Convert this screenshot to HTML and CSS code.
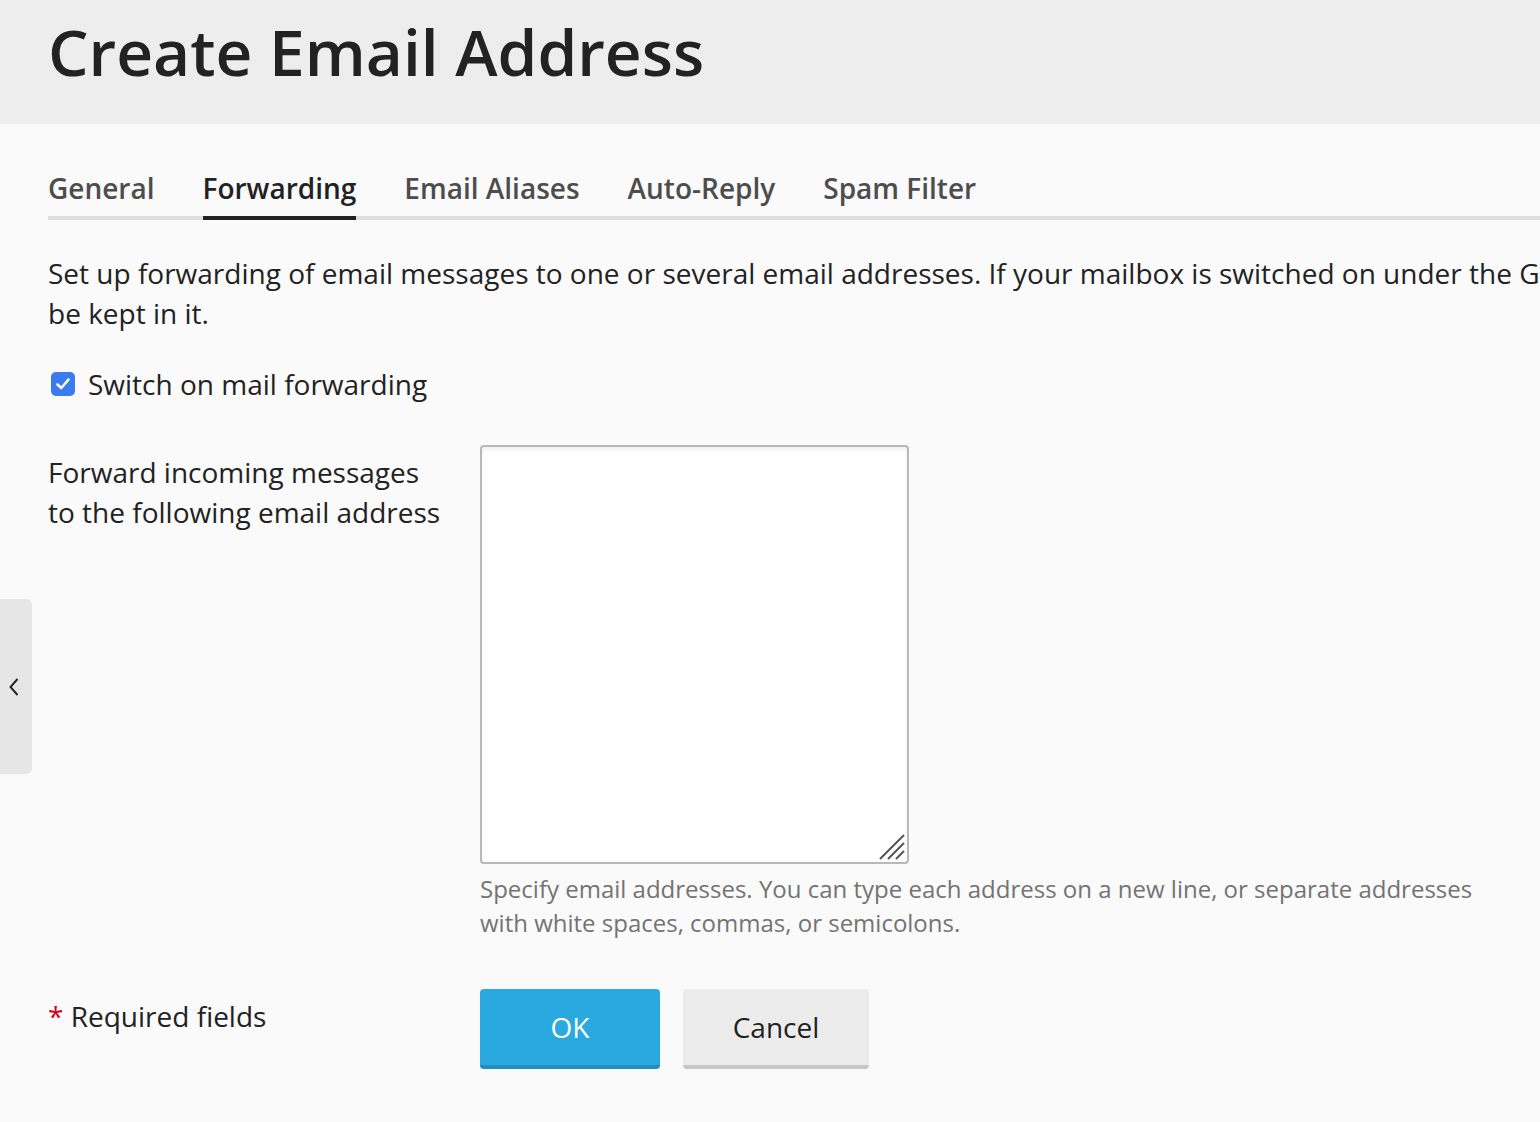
FILE: index.html
```html
<!DOCTYPE html>
<html lang="en">
<head>
<meta charset="utf-8">
<title>Create Email Address</title>
<link rel="stylesheet" href="styles.css">
</head>
<body>
<header class="page-header">
  <h1 class="page-title">Create Email Address</h1>
</header>
<main class="content">
  <nav class="tabs">
    <a class="tab">General</a>
    <a class="tab tab-active">Forwarding</a>
    <a class="tab">Email Aliases</a>
    <a class="tab">Auto-Reply</a>
    <a class="tab">Spam Filter</a>
  </nav>
  <p class="intro">Set up forwarding of email messages to one or several email addresses. If your mailbox is switched on under the General tab, the messages will also<br>be kept in it.</p>
  <label class="check-row">
    <span class="checkbox">
      <svg width="20" height="20" viewBox="0 0 20 20"><path d="M4.5 10.5 L8.3 14 L15.5 5.5" fill="none" stroke="#fff" stroke-width="2.6" stroke-linecap="round" stroke-linejoin="round"/></svg>
    </span>
    <span>Switch on mail forwarding</span>
  </label>
  <div class="form-row">
    <div class="form-label">Forward incoming messages to the following email address</div>
    <div class="form-field">
      <div class="textarea">
        <svg class="grip" width="30" height="30" viewBox="0 0 30 30"><path d="M4 28 L28 4 M12 28 L28 12 M20 28 L28 20" stroke="#555" stroke-width="2" fill="none"/></svg>
      </div>
      <div class="hint">Specify email addresses. You can type each address on a new line, or separate addresses with white spaces, commas, or semicolons.</div>
    </div>
  </div>
  <div class="form-row actions-row">
    <div class="form-label required"><span class="star">*</span> Required fields</div>
    <div class="buttons">
      <button class="btn btn-primary">OK</button>
      <button class="btn btn-secondary">Cancel</button>
    </div>
  </div>
</main>
<div class="side-toggle">
  <svg width="14" height="20" viewBox="0 0 14 20"><path d="M10.5 2 L3.5 10 L10.5 18" fill="none" stroke="#222" stroke-width="1.9"/></svg>
</div>
</body>
</html>
```

FILE: styles.css
```css
html, body {
  margin: 0;
  padding: 0;
  overflow: hidden;
}
body {
  background: #fafafa;
  font-family: "Open Sans", "Noto Sans", sans-serif;
  color: #222;
  width: 1540px;
  height: 1122px;
  position: relative;
}
.page-header {
  background: #ededed;
  height: 124px;
  box-sizing: border-box;
  padding: 14px 0 0 48px;
}
.page-title {
  margin: 0;
  font-size: 64px;
  line-height: 76px;
  font-weight: 600;
  color: #222;
}
.content {
  padding: 44px 0 0 48px;
  width: 2300px;
}
.tabs {
  display: flex;
  gap: 48px;
  border-bottom: 4px solid #dedede;
  width: 1492px;
}
.tab {
  font-size: 28px;
  line-height: 40px;
  font-weight: 600;
  padding: 0 0 8px;
  color: #4d4d4d;
  margin-bottom: -4px;
  border-bottom: 4px solid transparent;
}
.tab-active {
  color: #222;
  border-bottom-color: #222;
}
.intro {
  margin: 33px 0 0;
  font-size: 28px;
  line-height: 40px;
  width: 2100px;
}
.check-row {
  display: flex;
  align-items: center;
  gap: 13px;
  margin-top: 31px;
  font-size: 28px;
  line-height: 40px;
  padding-left: 3px;
}
.checkbox {
  width: 24px;
  height: 24px;
  border-radius: 5px;
  background: #3a7cf0;
  display: flex;
  align-items: center;
  justify-content: center;
}
.form-row {
  display: flex;
  margin-top: 41px;
}
.form-label {
  width: 432px;
  font-size: 28px;
  line-height: 40px;
  padding-top: 7px;
  flex-shrink: 0;
  padding-right: 36px;
  box-sizing: border-box;
}
.form-field {
  display: flex;
  flex-direction: column;
}
.textarea {
  width: 429px;
  height: 419px;
  box-sizing: border-box;
  border: 2px solid #b8b8b8;
  border-radius: 4px;
  background: #fff;
  box-shadow: inset 0 3px 4px rgba(0,0,0,0.06);
  position: relative;
}
.grip {
  position: absolute;
  right: 1px;
  bottom: 1px;
}
.hint {
  margin-top: 8px;
  font-size: 24px;
  line-height: 34px;
  color: #737373;
  width: 1010px;
}
.actions-row {
  margin-top: 49px;
}
.required {
  padding-top: 7px;
}
.star {
  color: #d0021b;
}
.buttons {
  display: flex;
  gap: 23px;
}
.btn {
  font-family: "Open Sans", "Noto Sans", sans-serif;
  font-size: 28px;
  height: 80px;
  border: 0;
  border-radius: 4px;
  padding: 0;
  box-sizing: border-box;
  cursor: pointer;
}
.btn-primary {
  width: 180px;
  background: #29a9df;
  color: #fff;
  border-bottom: 4px solid #238ebb;
}
.btn-secondary {
  width: 186px;
  background: #ececec;
  color: #222;
  border-bottom: 4px solid #c7c7c7;
}
.side-toggle {
  position: absolute;
  left: 0;
  top: 599px;
  width: 32px;
  height: 175px;
  background: #e6e6e6;
  border-radius: 0 6px 6px 0;
  display: flex;
  align-items: center;
  justify-content: flex-start;
  padding-left: 7px;
  box-sizing: border-box;
}
```
